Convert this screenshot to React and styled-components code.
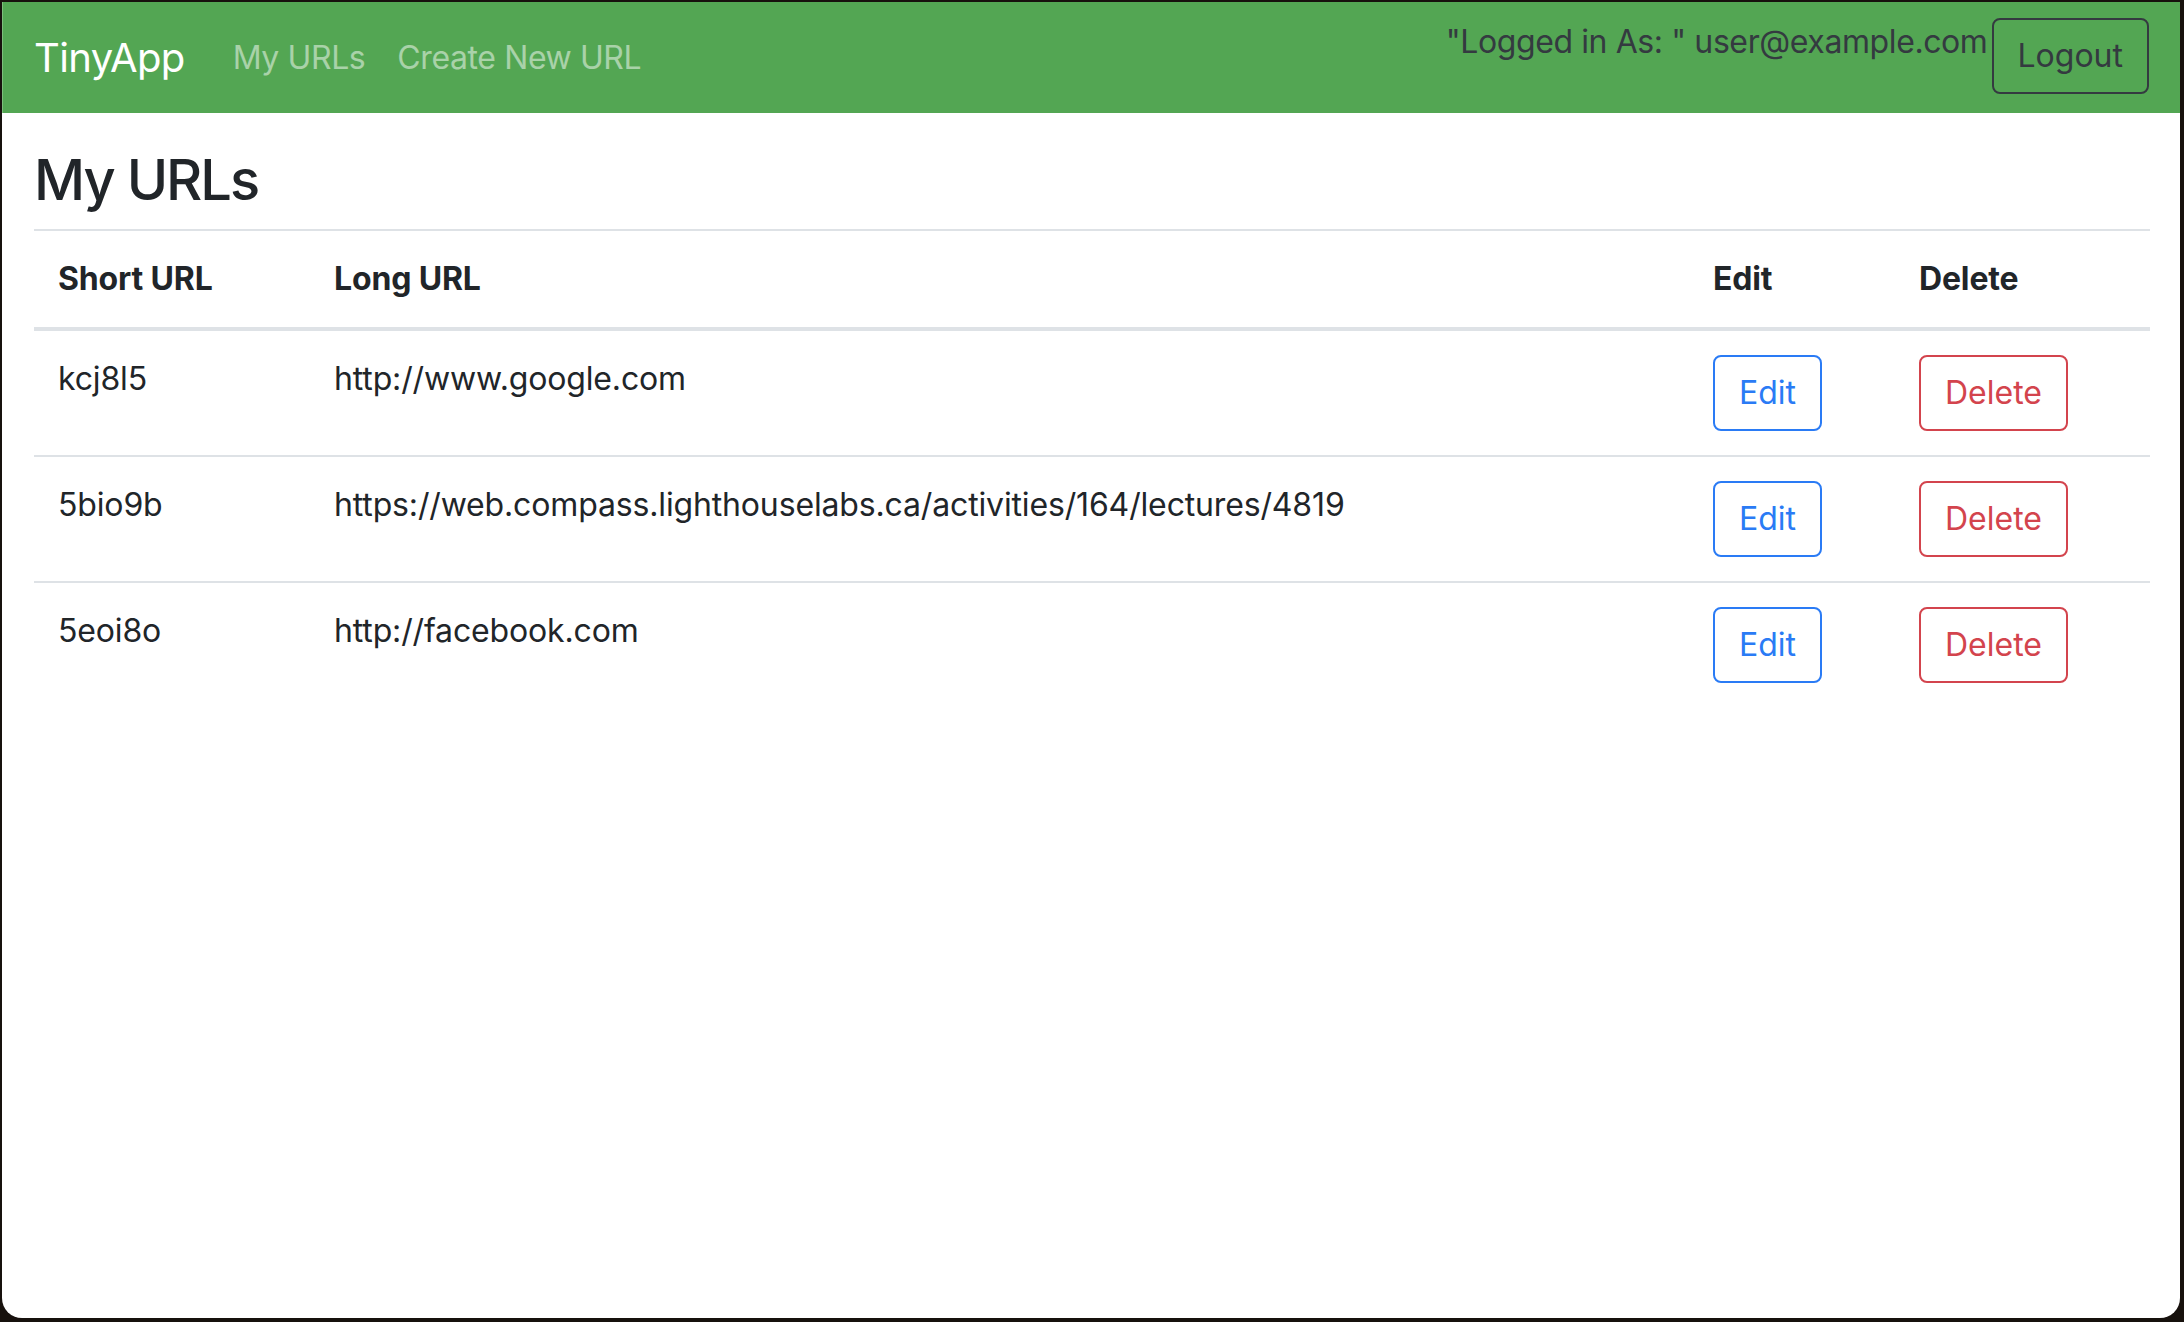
import React from 'react';
import styled, { createGlobalStyle } from 'styled-components';

const GlobalStyle = createGlobalStyle`
    html, body {
        margin: 0;
        height: 100%;
    }
    body {
        background: #17110d;
        padding: 2px 4px 4px 2px;
        box-sizing: border-box;
        font-family: Inter, "Noto Sans", "Liberation Sans", sans-serif;
        letter-spacing: -0.15px;
        color: #212529;
    }
    * {
        box-sizing: border-box;
    }
`;

const Window = styled.div`
    height: calc(100vh - 6px);
    background: #fff;
    border-radius: 0 0 20px 20px;
    overflow: hidden;
`;

const Navbar = styled.nav`
    display: flex;
    align-items: center;
    height: 111px;
    padding: 0 31px 0 31px;
    background-color: #53a653;
    border-left: 1px solid #7cbf7c;
`;

const Brand = styled.a`
    font-size: 40px;
    line-height: 1.5;
    letter-spacing: -0.6px;
    color: #fff;
    margin-right: 32px;
    text-decoration: none;
`;

const NavLink = styled.a`
    font-size: 32px;
    line-height: 48px;
    padding: 0 16px;
    letter-spacing: -0.4px;
    color: rgba(255, 255, 255, 0.5);
    text-decoration: none;
`;

const UserBox = styled.div`
    margin-left: auto;
    margin-top: -3px;
    display: flex;
    align-items: flex-start;
    gap: 4px;
    span {
        font-size: 32px;
        line-height: 48px;
        letter-spacing: -0.4px;
        color: #343a40;
        margin-top: 0;
    }
`;

const Button = styled.button`
    font-family: inherit;
    font-size: 32px;
    line-height: 48px;
    padding: 12px 24px;
    background: transparent;
    border: 2px solid ${(p) => p.color};
    border-radius: 8px;
    color: ${(p) => p.color};
    cursor: pointer;
`;

const Main = styled.main`
    padding: 0 30px 0 32px;
`;

const Title = styled.h3`
    font-size: 56px;
    font-weight: 500;
    line-height: 1.2;
    letter-spacing: -2px;
    margin: 34px 0 15px;
`;

const Table = styled.table`
    width: 100%;
    border-collapse: collapse;
    font-size: 32px;
    line-height: 48px;
    th,
    td {
        padding: 24px;
        text-align: left;
        vertical-align: top;
        border-top: 2px solid #dee2e6;
    }
    th {
        font-weight: 700;
        vertical-align: bottom;
        border-bottom: 4px solid #dee2e6;
    }
`;

const urls = [
    { id: 'kcj8l5', long: 'http://www.google.com' },
    { id: '5bio9b', long: 'https://web.compass.lighthouselabs.ca/activities/164/lectures/4819' },
    { id: '5eoi8o', long: 'http://facebook.com' },
];

export default function App() {
    return (
        <>
            <GlobalStyle />
            <Window>
                <Navbar>
                    <Brand href="#">TinyApp</Brand>
                    <NavLink href="#">My URLs</NavLink>
                    <NavLink href="#">Create New URL</NavLink>
                    <UserBox>
                        <span>"Logged in As: " user@example.com</span>
                        <Button color="#343a40">Logout</Button>
                    </UserBox>
                </Navbar>
                <Main>
                    <Title>My URLs</Title>
                    <Table>
                        <colgroup>
                            <col style={{ width: 276 }} />
                            <col />
                            <col style={{ width: 206 }} />
                            <col style={{ width: 255 }} />
                        </colgroup>
                        <thead>
                            <tr>
                                <th>Short URL</th>
                                <th>Long URL</th>
                                <th>Edit</th>
                                <th>Delete</th>
                            </tr>
                        </thead>
                        <tbody>
                            {urls.map((u) => (
                                <tr key={u.id}>
                                    <td>{u.id}</td>
                                    <td>{u.long}</td>
                                    <td>
                                        <Button color="#2a7bf5">Edit</Button>
                                    </td>
                                    <td>
                                        <Button color="#d3444d">Delete</Button>
                                    </td>
                                </tr>
                            ))}
                        </tbody>
                    </Table>
                </Main>
            </Window>
        </>
    );
}
